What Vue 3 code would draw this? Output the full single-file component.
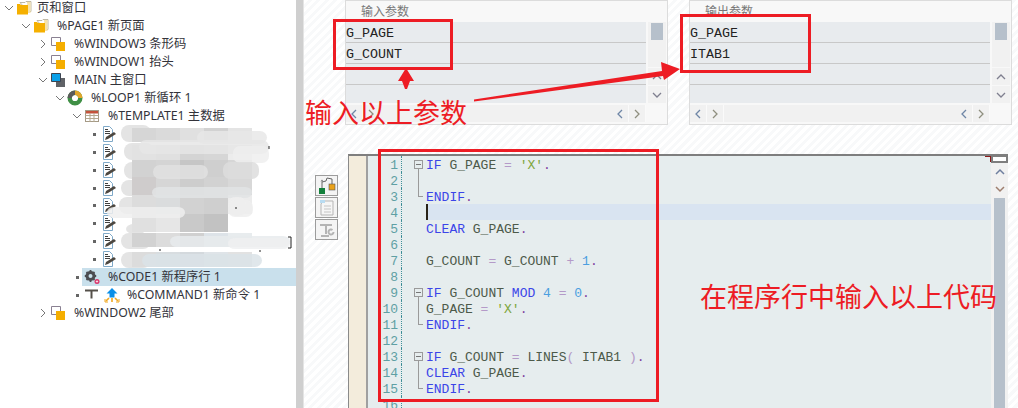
<script setup>
const tree = [
  { lvl: 0, chev: 'd', icon: 'folder', label: '页和窗口', gap: 5 },
  { lvl: 1, chev: 'd', icon: 'folder', label: '%PAGE1 新页面', gap: 8 },
  { lvl: 2, chev: 'r', icon: 'win', label: '%WINDOW3 条形码', gap: 8 },
  { lvl: 2, chev: 'r', icon: 'win', label: '%WINDOW1 抬头', gap: 8 },
  { lvl: 2, chev: 'd', icon: 'main', label: 'MAIN 主窗口', gap: 8 },
  { lvl: 3, chev: 'd', icon: 'loop', label: '%LOOP1 新循环 1', gap: 8 },
  { lvl: 4, chev: 'd', icon: 'table', label: '%TEMPLATE1 主数据', gap: 8 },
  ...Array.from({ length: 8 }, (_, i) => ({ lvl: 5, dot: true, icon: 'note', label: '', gap: 9, tight: i === 4 })),
  { lvl: 4, dot: true, icon: 'gear', label: '%CODE1 新程序行 1', gap: 8, sel: true },
  { lvl: 4, dot: true, icon: 'tee', extra: 'cmd', label: '%COMMAND1 新命令 1', gap: 7 },
  { lvl: 2, chev: 'r', icon: 'win', label: '%WINDOW2 尾部', gap: 8 }
]

const K = 'k', V = 'v', O = 'o', S = 's', N = 'n', P = 'p'
const code = [
  { fold: 'open', t: [[K, 'IF'], [V, ' G_PAGE '], [O, '= '], [S, "'X'"], [P, '.']] },
  { fold: 'bar', t: [] },
  { fold: 'end', t: [[K, 'ENDIF'], [P, '.']] },
  { cur: true, t: [] },
  { t: [[K, 'CLEAR'], [V, ' G_PAGE'], [P, '.']] },
  { t: [] },
  { t: [[V, 'G_COUNT '], [O, '= '], [V, 'G_COUNT '], [O, '+ '], [N, '1'], [P, '.']] },
  { t: [] },
  { fold: 'open', t: [[K, 'IF'], [V, ' G_COUNT '], [K, 'MOD '], [N, '4 '], [O, '= '], [N, '0'], [P, '.']] },
  { fold: 'bar', t: [[V, 'G_PAGE '], [O, '= '], [S, "'X'"], [P, '.']] },
  { fold: 'end', t: [[K, 'ENDIF'], [P, '.']] },
  { t: [] },
  { fold: 'open', t: [[K, 'IF'], [V, ' G_COUNT '], [O, '= '], [V, 'LINES'], [O, '( '], [V, 'ITAB1 '], [O, ')'], [P, '.']] },
  { fold: 'bar', t: [[K, 'CLEAR'], [V, ' G_PAGE'], [P, '.']] },
  { fold: 'end', t: [[K, 'ENDIF'], [P, '.']] },
  { t: [] }
]

const panels = [
  { title: '输入参数', rows: ['G_PAGE', 'G_COUNT', '', ''] },
  { title: '输出参数', rows: ['G_PAGE', 'ITAB1', '', ''] }
]

const cols = [132, 156, 180, 204, 228]
const bands = [
  [128, 14, ['#d6d6d6', '#dadada', '#e0e0e0', '#d2d2d2', '#e4e4e4']],
  [145, 15, ['#e2e2e2', '#e0e0e0', '#d4d4d4', '#d6d6d6', '#ececec']],
  [160, 17, ['#d2d2d2', '#d4d4d4', '#c6c6c6', '#cfcfcf', '#d6d6d6']],
  [177, 18, ['#cfcccc', '#d6d6d6', '#cdcdcd', '#d2d2d2', '#d8d8d8']],
  [195, 19, ['#dcdcdc', '#dadcdd', '#d2d2d2', '#cfcfcf', '#ececec']],
  [214, 18, ['#e0e0e0', '#e6e6e6', '#c9c9c9', '#c2c2c2', '#ffffff']],
  [233, 14, ['#d2d2d2', '#dcdcdc', '#d0d0d0', '#dde3e8', '#e8ecee']],
  [252, 15, ['#dcdcdc', '#d8dde0', '#d4d9dd', '#dfe4e8', '#e2e2e2']]
]
const mosaic = bands.flatMap(([y, h, fills]) =>
  fills.map((f, i) => ({ x: cols[i], y, h, f }))
)
const basePills = [
  [121, 125, 30, 17], [124, 143, 30, 17], [124, 162, 30, 17], [121, 180, 30, 16], [119, 197, 30, 17], [126, 224, 20, 10], [121, 233, 30, 16], [121, 252, 30, 16]
]
const topPills = [
  [197, 131, 70, 13, '#e8e8e8'], [139, 140, 130, 14, '#e6e6e6'], [233, 146, 36, 17, '#eeeeee'],
  [153, 165, 55, 14, '#e2e2e2'], [223, 162, 36, 17, '#dddddd'], [152, 187, 100, 11, '#e2e4e5'],
  [228, 197, 18, 19, '#eeeeee'], [107, 207, 78, 11, '#eeeeee'], [228, 200, 25, 17, '#eeeeee'],
  [170, 236, 120, 11, '#e8ebed'], [228, 238, 62, 11, '#eef0f1'], [142, 254, 120, 13, '#dbe3e8']
]
</script>

<template>
  <div class="page">
    <aside class="tree">
      <div
        v-for="(r, i) in tree"
        :key="i"
        class="node"
        :class="{ sel: r.sel, tight: r.tight }"
        :style="{ paddingLeft: r.lvl * 17 + 2 + 'px' }"
      >
        <span class="twist">
          <svg v-if="r.chev === 'd'" width="10" height="10" viewBox="0 0 10 10"><path d="M1 3l4 4 4-4" fill="none" stroke="#777" /></svg>
          <svg v-else-if="r.chev === 'r'" width="10" height="10" viewBox="0 0 10 10"><path d="M3 1l4 4-4 4" fill="none" stroke="#777" /></svg>
          <i v-else-if="r.dot" class="dot"></i>
        </span>
        <svg class="ic" width="16" height="16" viewBox="0 0 16 16">
          <g v-if="r.icon === 'folder'">
            <path d="M4 2.500h5l1-1h5v10h-3z" fill="#fff" stroke="#b0a890" stroke-width=".8" />
            <path d="M11 2h3.500v11H12z" fill="#f6e2a8" />
            <path d="M1 4h3l1 1h7v9.500H1z" fill="#f5b000" />
          </g>
          <g v-else-if="r.icon === 'win'">
            <path d="M1.500 1.500h9v8h-9z" fill="#fff" stroke="#8a8192" />
            <rect x="6" y="6" width="9" height="9" fill="#f5ae00" />
          </g>
          <g v-else-if="r.icon === 'main'">
            <path d="M6 6h9v9H6z" fill="#5f6266" />
            <path d="M1.500 1.500h9v8h-9z" fill="#0aa0e8" stroke="#3d4450" />
          </g>
          <g v-else-if="r.icon === 'loop'">
            <circle cx="8" cy="8" r="5.300" fill="none" stroke="#3f8f45" stroke-width="4.400" />
            <path d="M2.700 8a5.300 5.300 0 0 1 5.300-5.300" fill="none" stroke="#5b5b5b" stroke-width="4.400" />
            <path d="M8 2.700a5.300 5.300 0 0 1 5.300 5.300" fill="none" stroke="#e1a62a" stroke-width="4.400" />
          </g>
          <g v-else-if="r.icon === 'table'">
            <rect x="1.500" y="2.500" width="13" height="11" fill="#fff" stroke="#a59a86" />
            <rect x="2" y="3" width="12" height="2.500" fill="#c4533b" />
            <path d="M1.500 7.500h13M1.500 10.500h13M6 5v9M10 5v9" stroke="#b4a98f" fill="none" />
          </g>
          <g v-else-if="r.icon === 'note'">
            <path d="M2.500 .500h6l3 3v12h-9z" fill="#fff" stroke="#7fa9c8" />
            <path d="M4 3.500h3M4 5.500h5M4 7.500h5" stroke="#3f3f3f" fill="none" />
            <path d="M4 14l1-3 8-5 2 2-8 5z" fill="#4c4740" />
          </g>
          <g v-else-if="r.icon === 'gear'">
            <circle cx="6.500" cy="7" r="3.500" fill="none" stroke="#4c4d52" stroke-width="3" />
            <path d="M6.500 1v2.500M6.500 10.500V13M.8 7h2.700M9.500 7h2.700M2.500 3l2 2M8.500 9l2 2M10.500 3l-2 2M4.500 9l-2 2" stroke="#4c4d52" stroke-width="1.800" />
            <circle cx="13" cy="12.500" r="2.500" fill="#d8346a" />
            <path d="M11.800 12.500h2.400M13 11.300v2.400" stroke="#fff" stroke-width=".7" />
          </g>
          <g v-else-if="r.icon === 'tee'">
            <path d="M1 3.500h13" stroke="#55504a" stroke-width="2" />
            <path d="M7.500 3.500v8" stroke="#55504a" stroke-width="2" />
          </g>
        </svg>
        <svg v-if="r.extra === 'cmd'" class="ic2" width="16" height="16" viewBox="0 0 16 16">
          <path d="M8 1l5.500 5.500h-3v4h-5v-4h-3z" fill="#0a8fe8" />
          <path d="M5 11l-3 3M11 11l3 3M8 11v4" stroke="#f0a820" stroke-width="1.600" fill="none" />
          <path d="M1 12v3h3M15 12v3h-3" stroke="#f0a820" fill="none" />
        </svg>
        <span v-if="r.label" class="lbl" :style="{ marginLeft: r.gap + 'px' }">{{ r.label }}</span>
      </div>

      <svg class="smear" width="296" height="408" viewBox="0 0 296 408">
        <defs>
          <filter id="soft" x="-20%" y="-20%" width="140%" height="140%"><feGaussianBlur stdDeviation=".7" /></filter>
        </defs>
        <g filter="url(#soft)">
          <rect v-for="(p, i) in basePills" :key="'p' + i" :x="p[0]" :y="p[1]" :width="p[2]" :height="p[3]" rx="8" fill="#e4e4e4" />
        </g>
        <rect v-for="(m, i) in mosaic" :key="'m' + i" :x="m.x" :y="m.y" width="24" :height="m.h" :fill="m.f" />
        <g filter="url(#soft)">
          <rect v-for="(p, i) in topPills" :key="'t' + i" :x="p[0]" :y="p[1]" :width="p[2]" :height="p[3]" rx="7" :fill="p[4]" opacity=".85" />
        </g>
        <path d="M288 237h3v11h-3M269 146v3M260 250v2M160 249v2M236 207v2" fill="none" stroke="#222" />
      </svg>
    </aside>

    <div class="split"></div>

    <main class="work">
      <div class="params">
        <section v-for="p in panels" :key="p.title" class="panel">
          <div class="ptitle">{{ p.title }}</div>
          <div class="pbody">
            <div class="pgrid">
              <div v-for="(c, i) in p.rows" :key="i" class="prow">{{ c }}</div>
            </div>
            <div class="vbar">
              <div class="vtrack"><i class="vthumb"></i></div>
              <button class="sb"><svg width="10" height="10" viewBox="0 0 10 10"><path d="M1 7l4-4 4 4" fill="none" stroke="#7f7f8f" stroke-width="1.300" /></svg></button>
              <button class="sb"><svg width="10" height="10" viewBox="0 0 10 10"><path d="M1 3l4 4 4-4" fill="none" stroke="#7f7f8f" stroke-width="1.300" /></svg></button>
            </div>
          </div>
          <div class="hbar">
            <button class="sb"><svg width="10" height="10" viewBox="0 0 10 10"><path d="M7 1L3 5l4 4" fill="none" stroke="#6f86a6" stroke-width="1.300" /></svg></button>
            <button class="sb"><svg width="10" height="10" viewBox="0 0 10 10"><path d="M3 1l4 4-4 4" fill="none" stroke="#8f8f7f" stroke-width="1.300" /></svg></button>
            <span class="hfill"></span>
            <button class="sb"><svg width="10" height="10" viewBox="0 0 10 10"><path d="M7 1L3 5l4 4" fill="none" stroke="#6f86a6" stroke-width="1.300" /></svg></button>
            <button class="sb"><svg width="10" height="10" viewBox="0 0 10 10"><path d="M3 1l4 4-4 4" fill="none" stroke="#8f8f7f" stroke-width="1.300" /></svg></button>
          </div>
        </section>
      </div>

      <div class="lower">
        <div class="tools">
          <button class="tool">
            <svg width="18" height="18" viewBox="0 0 18 18">
              <path d="M4 11V5l4-1 1-3 5 1v5" fill="none" stroke="#666" />
              <path d="M4 2.500l1.500 2h-3z" fill="#777" />
              <rect x="1" y="11" width="6" height="6" fill="#14803c" />
              <rect x="11" y="7" width="6" height="6" fill="#eaa21a" stroke="#555" stroke-width=".6" />
            </svg>
          </button>
          <button class="tool dim">
            <svg width="18" height="18" viewBox="0 0 18 18">
              <path d="M5 2h10v14H3V5z" fill="#f6f6f6" stroke="#b5b5b5" />
              <path d="M2 1h5v3H2z" fill="#b9dcf2" />
              <path d="M6 7h7M6 10h7M6 13h7" stroke="#c4c4c4" fill="none" />
            </svg>
          </button>
          <button class="tool dim">
            <svg width="18" height="18" viewBox="0 0 18 18">
              <path d="M2 3h12v2H9v8H7V5H2z" fill="#b4b4b4" />
              <path d="M3 14h8v2H3z" fill="#b4b4b4" />
              <path d="M15.500 11a2.500 2.500 0 1 1-1-2" fill="none" stroke="#b4b4b4" stroke-width="2" />
            </svg>
          </button>
        </div>

        <div class="editor">
          <div class="margin"></div>
          <div class="code">
            <div v-for="(l, i) in code" :key="i" class="line" :class="{ cur: l.cur }">
              <span class="num">{{ i + 1 }}</span>
              <span class="fold" :class="l.fold"></span>
              <span class="src"><i v-if="l.cur" class="caret"></i><span v-for="(s, j) in l.t" :key="j" :class="s[0]">{{ s[1] }}</span></span>
            </div>
            <i class="corner"></i>
          </div>
          <div class="evbar">
            <div class="split-box"></div>
            <button class="esb"><svg width="10" height="10" viewBox="0 0 10 10"><path d="M1 7l4-4 4 4" fill="none" stroke="#6f7f9f" stroke-width="1.500" /></svg></button>
            <button class="esb"><svg width="10" height="10" viewBox="0 0 10 10"><path d="M1 3l4 4 4-4" fill="none" stroke="#9f7f6f" stroke-width="1.500" /></svg></button>
            <div class="ethumb"></div>
          </div>
        </div>
      </div>
    </main>

    <div class="box box-a"></div>
    <div class="box box-b"></div>
    <div class="box box-c"></div>
    <svg class="arrows" width="1018" height="408" viewBox="0 0 1018 408">
      <path d="M406 68L414 81H410L407 89H405L402 81H398Z" fill="#ed1c24" />
      <path d="M474 99.500L662 71L661 62L680 69L664 80L663 76L474 101.500Z" fill="#ed1c24" />
    </svg>
    <div class="note note-a">输入以上参数</div>
    <div class="note note-b">在程序行中输入以上代码</div>
  </div>
</template>

<style scoped>
.page {
  position: relative;
  display: flex;
  width: 1018px;
  height: 408px;
  overflow: hidden;
  background: #fff;
  font-family: "Noto Sans", "Noto Sans CJK SC", sans-serif;
}
.tree {
  position: relative;
  flex: 0 0 296px;
  font-size: 12.300px;
  color: #33333a;
}
.node {
  display: flex;
  align-items: center;
  height: 18px;
  white-space: nowrap;
}
.node:first-child { margin-top: -1px; }
.node.tight { height: 17px; }
.node.sel {
  background: linear-gradient(to right, transparent 82px, #c9e0ec 82px);
}
.twist {
  flex: 0 0 14px;
  display: flex;
  align-items: center;
  justify-content: center;
}
.dot {
  width: 3px;
  height: 3px;
  background: #666;
}
.ic, .ic2 { flex: none; }
.ic2 { margin-left: 4px; }
.lbl { line-height: 18px; }
.smear {
  position: absolute;
  left: 0;
  top: 0;
  pointer-events: none;
}
.split {
  flex: 0 0 7px;
  background: #cfcfcf;
  border-right: 1px solid #e4e4e4;
}
.work {
  flex: 1;
  display: flex;
  flex-direction: column;
  background: repeating-linear-gradient(135deg, #fff 0 3px, #f8f9fa 3px 6px);
}
.params {
  display: flex;
  gap: 21px;
  padding-left: 41px;
}
.panel {
  width: 323px;
  height: 125px;
  border: 1px solid #dcdcdc;
  background: #f8f8f8;
  box-sizing: border-box;
  display: flex;
  flex-direction: column;
}
.ptitle {
  height: 21px;
  padding-left: 15px;
  font-size: 12px;
  line-height: 22px;
  color: #777;
}
.pbody { display: flex; }
.pgrid { width: 300px; }
.prow {
  box-sizing: border-box;
  height: 21px;
  background: #e8ebee;
  border-bottom: 1px solid #c8c8c8;
  font: 13.330px/23px "Liberation Mono", monospace;
  color: #222;
}
.prow:last-child { height: 18px; border-bottom: 0; }
.vbar {
  margin-left: 2px;
  width: 18px;
  height: 81px;
  display: flex;
  flex-direction: column;
  gap: 1px;
}
.vtrack {
  flex: 1;
  background: #f1f1f1;
  padding: 1px 3px;
}
.vthumb {
  display: block;
  height: 17px;
  background: #b6c0cb;
}
.sb {
  flex: none;
  width: 18px;
  height: 17px;
  padding: 0;
  border: 0;
  background: #f1f1f1;
  display: flex;
  align-items: center;
  justify-content: center;
}
.hbar {
  margin-top: 2px;
  width: 300px;
  height: 17px;
  display: flex;
  gap: 0;
  background: #f1f1f1;
}
.hfill { flex: 1; }
.hbar .sb { width: 17px; border-right: 1px solid #fafafa; }
.lower {
  display: flex;
  margin-top: 29px;
  padding-left: 11px;
  flex: 1;
  min-height: 0;
}
.tools {
  flex: 0 0 23px;
  margin-top: 21px;
  display: flex;
  flex-direction: column;
  gap: 1px;
}
.tool {
  width: 23px;
  height: 21px;
  padding: 0;
  border: 1px solid #9c9c9c;
  background: #f4f4f4;
  display: flex;
  align-items: center;
  justify-content: center;
}
.editor {
  margin-left: 10px;
  width: 660px;
  height: 260px;
  box-sizing: border-box;
  border-top: 2px solid #7e7e7e;
  border-left: 1px solid #8a8a8a;
  display: flex;
}
.margin {
  flex: 0 0 19px;
  box-sizing: border-box;
  background: #f3ecdc;
  border-right: 2px solid #a0a0a0;
}
.code {
  position: relative;
  flex: 0 0 623px;
  background: #e6edee;
  font: 13px/20px "Liberation Mono", monospace;
}
.corner {
  position: absolute;
  right: 0;
  top: 0;
  width: 5px;
  height: 5px;
  border-top: 1px solid #8c1a1a;
  border-right: 1px solid #8c1a1a;
}
.line {
  display: flex;
  height: 16px;
  white-space: pre;
}
.line.cur {
  background: linear-gradient(to right, transparent 59px, #d9e4f1 59px);
}
.num {
  flex: 0 0 34px;
  text-align: right;
  color: #5fa0a4;
  border-right: 1px dotted #3f8f98;
  padding-right: 3px;
  box-sizing: border-box;
}
.fold {
  position: relative;
  flex: 0 0 24px;
}
.fold.open::before {
  content: "";
  position: absolute;
  left: 12px;
  top: 4px;
  width: 7px;
  height: 7px;
  border: 1px solid #9a9a9a;
  background: linear-gradient(#777, #777) center / 5px 1px no-repeat;
}
.fold.bar::before {
  content: "";
  position: absolute;
  left: 16px;
  top: -3px;
  bottom: 0;
  border-left: 1px solid #9a9a9a;
}
.fold.end::before {
  content: "";
  position: absolute;
  left: 16px;
  top: -1px;
  height: 9px;
  width: 4px;
  border-left: 1px solid #9a9a9a;
  border-bottom: 1px solid #9a9a9a;
}
.src { position: relative; }
.caret {
  position: absolute;
  left: 0;
  top: 0;
  width: 2px;
  height: 16px;
  background: #2a2418;
}
.k { color: #3b45e8; }
.v { color: #4d5a4a; }
.o { color: #b49ac8; }
.s { color: #7ea63c; }
.n { color: #4c9fe0; }
.p { color: #7f3f9f; }
.evbar {
  flex: 0 0 17px;
  display: flex;
  flex-direction: column;
  align-items: center;
  background: #f1f1f1;
}
.split-box {
  box-sizing: border-box;
  align-self: stretch;
  height: 7px;
  border: 2px solid #7e7e7e;
  border-top-width: 1px;
  background: #fff;
}
.esb {
  width: 17px;
  height: 17px;
  padding: 0;
  border: 0;
  background: transparent;
  display: flex;
  align-items: center;
  justify-content: center;
}
.ethumb {
  margin-top: 1px;
  width: 11px;
  flex: 1;
  background: #b6c0cb;
}
.box {
  position: absolute;
  box-sizing: border-box;
  border: 3px solid #ed1c24;
}
.box-a { left: 333px; top: 19px; width: 120px; height: 51px; }
.box-b { left: 680px; top: 14px; width: 131px; height: 59px; }
.box-c { left: 378px; top: 149px; width: 281px; height: 253px; }
.arrows {
  position: absolute;
  left: 0;
  top: 0;
  pointer-events: none;
}
.note {
  position: absolute;
  font-size: 27px;
  line-height: 32px;
  color: #ed1c24;
  white-space: nowrap;
  font-family: "Noto Sans CJK SC", sans-serif;
}
.note-a { left: 305px; top: 96px; }
.note-b { left: 700px; top: 280px; }
</style>
